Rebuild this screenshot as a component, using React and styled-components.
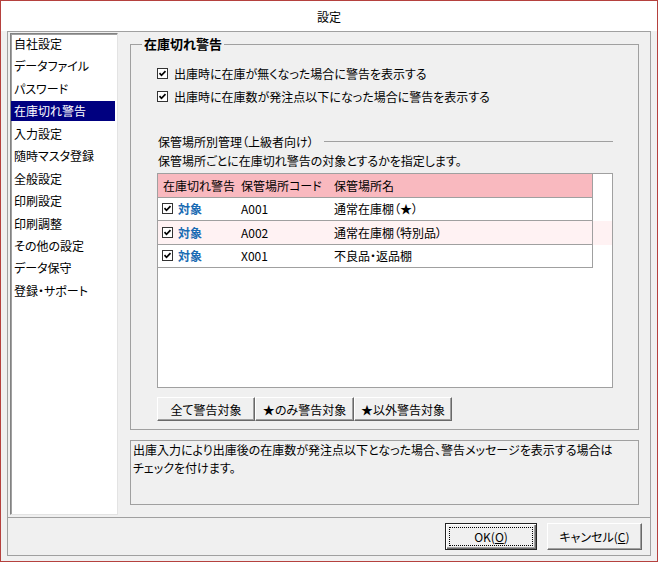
import React from 'react';
import styled, { createGlobalStyle } from 'styled-components';

const GlobalStyle = createGlobalStyle`
  html, body {
    margin:0;
    padding:0;
    background:#fff;
  }
  body {
    font-family:"Noto Sans CJK JP", "Noto Sans", sans-serif;
    font-size:12px;
    font-feature-settings:"palt";
    color:#000;
  }
  *{
    box-sizing:border-box;
  }
`;

const Window = styled.div`
  width:658px;
  height:562px;
  border:1px solid #b5413e;
  background:#f0f0f0;
  display:flex;
  flex-direction:column;
`;

const TitleBar = styled.div`
  height:30px;
  background:#fff;
  display:flex;
  align-items:center;
  justify-content:center;
  font-size:12px;
`;

const Body = styled.div`
  flex:1;
  display:flex;
  padding:0 6px 5px 6px;
`;

const Frame = styled.div`
  flex:1;
  display:flex;
  flex-direction:column;
  border:1px solid #a0a0a0;
`;

const Content = styled.div`
  height:485px;
  display:flex;
`;

const SideList = styled.ul`
  width:108px;
  margin:1px 0 2px 2px;
  padding:0;
  list-style:none;
  background:#fff;
  border-top:1px solid #828282;
  border-left:1px solid #828282;
  border-right:1px solid #e3e3e3;
  border-bottom:1px solid #e3e3e3;
  box-shadow:inset 1px 1px 0 #a0a0a0;
`;

const SideItem = styled.li`
  height:20px;
  line-height:20px;
  margin:0 2px 2.45px 0;
  padding-left:3px;
  white-space:nowrap;
  background:${(p) => (p.$active ? '#000080' : 'transparent')};
  color:${(p) => (p.$active ? '#fff' : '#000')};
`;

const RightPane = styled.div`
  flex:1;
  display:flex;
  flex-direction:column;
  padding:5px 11px 12px 12px;
`;

const Group = styled.fieldset`
  margin:0;
  padding:0;
  min-width:0;
  height:393px;
  border:1px solid #a0a0a0;
`;

const Legend = styled.legend`
  margin-left:11px;
  padding:0 2px;
  font-size:13px;
  font-weight:bold;
  line-height:14px;
`;

const GroupBody = styled.div`
  display:flex;
  flex-direction:column;
  padding:11px 25px 0 26px;
`;

const CheckRow = styled.label`
  height:23px;
  display:flex;
  align-items:center;
  gap:6px;
  white-space:nowrap;
`;

const CheckSvg = styled.svg`
  flex:none;
  display:block;
`;

const SectionHead = styled.div`
  margin-top:25px;
  height:16px;
  display:flex;
  align-items:center;
  padding-left:1px;
  white-space:nowrap;
`;

const SectionLine = styled.div`
  flex:1;
  height:1px;
  margin-left:10px;
  background:#a0a0a0;
`;

const Hint = styled.div`
  margin-top:4px;
  height:16px;
  line-height:16px;
  padding-left:1px;
  white-space:nowrap;
`;

const Table = styled.div`
  margin-top:4px;
  height:215px;
  border:1px solid #a0a0a0;
  background:#fff;
`;

const TRow = styled.div`
  display:flex;
  background:${(p) => p.$bg || 'transparent'};
`;

const TGrid = styled.div`
  width:435px;
  height:23.5px;
  display:flex;
  background:${(p) => p.$bg || 'transparent'};
  border-right:1px solid #a0a0a0;
  border-bottom:1px solid #a0a0a0;
`;

const Cell = styled.div`
  width:${(p) => (p.$w ? `${p.$w}px` : 'auto')};
  flex:${(p) => (p.$w ? 'none' : '1')};
  display:flex;
  align-items:center;
  gap:5px;
  padding-left:${(p) => p.$pl || 4}px;
  white-space:nowrap;
`;

const Target = styled.span`
  color:#1a6bb3;
  font-weight:bold;
`;

const ButtonStrip = styled.div`
  margin-top:9px;
  display:flex;
`;

const ClassicButton = styled.button`
  width:${(p) => p.$w}px;
  height:${(p) => p.$h || 24}px;
  padding:0;
  font:inherit;
  font-size:12px;
  color:#000;
  background:#f0f0f0;
  border-top:1px solid #fff;
  border-left:1px solid #fff;
  border-right:1px solid #696969;
  border-bottom:1px solid #696969;
  box-shadow:inset -1px -1px 0 #a0a0a0;
  white-space:nowrap;
`;

const DefaultButton = styled(ClassicButton)`
  border:1px solid #222;
  box-shadow:inset 1px 1px 0 #fff, inset -1px -1px 0 #696969, inset -2px -2px 0 #a0a0a0;
  outline:1px dotted #000;
  outline-offset:-5px;
`;

const Description = styled.div`
  margin-top:10px;
  height:65px;
  border:1px solid #a0a0a0;
  padding:0 2px;
  line-height:17.5px;
  white-space:nowrap;
`;

const ButtonBar = styled.div`
  height:38px;
  border-top:1px solid #a0a0a0;
  display:flex;
  justify-content:flex-end;
  align-items:flex-start;
  gap:10px;
  padding:5px 8px 0 0;
`;

const CheckBox = () => (
  <CheckSvg width="11" height="11" viewBox="0 0 11 11">
    <rect x="0.5" y="0.5" width="10" height="10" fill="#fff" stroke="#333" />
    <path d="M2.5 5.2 L4.5 7.3 L8.5 3.2" fill="none" stroke="#000" strokeWidth="1.7" />
  </CheckSvg>
);

const menu = [
  '自社設定', 'データファイル', 'パスワード', '在庫切れ警告', '入力設定', '随時マスタ登録',
  '全般設定', '印刷設定', '印刷調整', 'その他の設定', 'データ保守', '登録・サポート',
];

const places = [
  { code: 'A001', name: '通常在庫棚（★）', bg: '#fff' },
  { code: 'A002', name: '通常在庫棚（特別品）', bg: '#fff2f3' },
  { code: 'X001', name: '不良品・返品棚', bg: '#fff' },
];

export default function App() {
  return (
    <>
      <GlobalStyle />
      <Window>
        <TitleBar>設定</TitleBar>
        <Body>
          <Frame>
            <Content>
              <SideList>
                {menu.map((m, i) => (
                  <SideItem key={m} $active={i === 3}>{m}</SideItem>
                ))}
              </SideList>
              <RightPane>
                <Group>
                  <Legend>在庫切れ警告</Legend>
                  <GroupBody>
                    <CheckRow><CheckBox />出庫時に在庫が無くなった場合に警告を表示する</CheckRow>
                    <CheckRow><CheckBox />出庫時に在庫数が発注点以下になった場合に警告を表示する</CheckRow>
                    <SectionHead>
                      保管場所別管理（上級者向け）
                      <SectionLine />
                    </SectionHead>
                    <Hint>保管場所ごとに在庫切れ警告の対象とするかを指定します。</Hint>
                    <Table>
                      <TRow>
                        <TGrid $bg="#f9b9bf">
                          <Cell $w={79} $pl={5}>在庫切れ警告</Cell>
                          <Cell $w={93}>保管場所コード</Cell>
                          <Cell>保管場所名</Cell>
                        </TGrid>
                      </TRow>
                      {places.map((p) => (
                        <TRow key={p.code} $bg={p.bg}>
                          <TGrid>
                            <Cell $w={79}><CheckBox /><Target>対象</Target></Cell>
                            <Cell $w={93}>{p.code}</Cell>
                            <Cell>{p.name}</Cell>
                          </TGrid>
                        </TRow>
                      ))}
                    </Table>
                    <ButtonStrip>
                      <ClassicButton $w={98}>全て警告対象</ClassicButton>
                      <ClassicButton $w={99}>★のみ警告対象</ClassicButton>
                      <ClassicButton $w={98}>★以外警告対象</ClassicButton>
                    </ButtonStrip>
                  </GroupBody>
                </Group>
                <Description>
                  出庫入力により出庫後の在庫数が発注点以下となった場合、警告メッセージを表示する場合は
                  <br />
                  チェックを付けます。
                </Description>
              </RightPane>
            </Content>
            <ButtonBar>
              <DefaultButton $w={92} $h={27}>OK(<u>O</u>)</DefaultButton>
              <ClassicButton $w={95} $h={27}>キャンセル(<u>C</u>)</ClassicButton>
            </ButtonBar>
          </Frame>
        </Body>
      </Window>
    </>
  );
}
